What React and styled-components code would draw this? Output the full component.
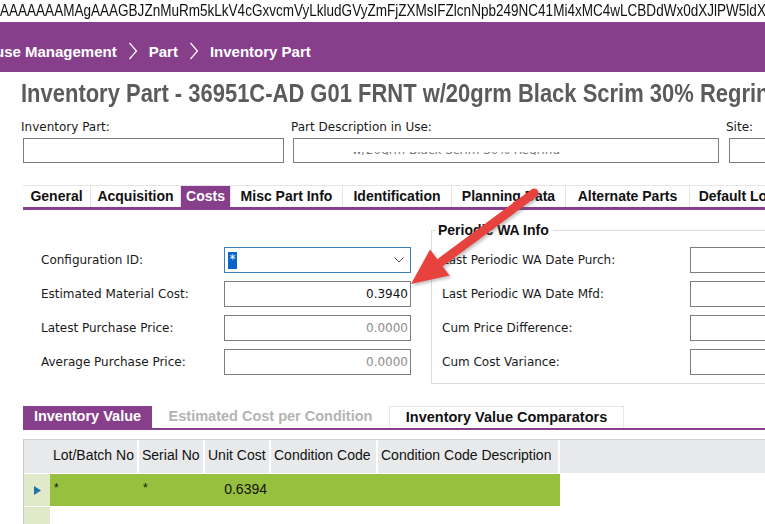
import React from "react";
import styled, { createGlobalStyle } from "styled-components";

const Global = createGlobalStyle`
  html, body { margin: 0; padding: 0; background: #fff; }
  body { width: 765px; height: 524px; overflow: hidden; }
`;

const PURPLE = "#873f8c";

const Page = styled.div`
  position: relative;
  width: 765px;
  height: 524px;
  overflow: hidden;
  background: #fff;
  font-family: "DejaVu Sans", sans-serif;
`;

const UrlLine = styled.div`
  height: 22px;
  line-height: 20px;
  font-family: "Liberation Sans", Arial, sans-serif;
  font-size: 16.5px;
  color: #111;
  white-space: nowrap;
  transform: scaleX(0.82);
  transform-origin: 0 0;
`;

const Crumbs = styled.div`
  height: 50px;
  box-sizing: border-box;
  background: ${PURPLE};
  display: flex;
  align-items: flex-start;
  gap: 11px;
  padding-top: 21px;
  margin-left: -5px;
  color: #fff;
  font-family: "Liberation Sans", Arial, sans-serif;
  font-weight: bold;
  font-size: 15px;
  line-height: 18px;
  white-space: nowrap;
`;

const Chevron = styled.svg`
  width: 10px;
  height: 18px;
  margin-top: -1px;
  flex: none;
`;

const Title = styled.h1`
  margin: 6px 0 0 21px;
  height: 30px;
  font-family: "Liberation Sans", Arial, sans-serif;
  font-weight: bold;
  font-size: 26px;
  line-height: 30px;
  color: #5b5b5b;
  white-space: nowrap;
  transform: scaleX(0.845);
  transform-origin: 0 0;
`;

const HeaderFields = styled.div`
  display: flex;
  padding-top: 11px;
  padding-left: 21px;
`;

const HeaderField = styled.div`
  width: ${(p) => p.$w}px;
  flex: none;
`;

const Label = styled.div`
  font-family: "DejaVu Sans", sans-serif;
  font-size: 12px;
  line-height: 16px;
  color: #1a1a1a;
  white-space: nowrap;
`;

const Box = styled.div`
  position: relative;
  box-sizing: border-box;
  margin-top: 3px;
  margin-left: ${(p) => p.$ml}px;
  width: ${(p) => p.$w}px;
  height: 25px;
  border: 1px solid #7c7c7c;
  overflow: hidden;
`;

const Redact = styled.div`
  position: absolute;
  background: #fff;
  left: ${(p) => p.$x}px;
  top: ${(p) => p.$y}px;
  width: ${(p) => p.$w}px;
  height: ${(p) => p.$h}px;
`;

const FaintText = styled.div`
  position: absolute;
  left: 58px;
  top: 4px;
  font-size: 12px;
  color: #777;
  white-space: nowrap;
`;

const TabBar = styled.div`
  display: flex;
  margin: ${(p) => p.$mt}px 0 0 23px;
  border-top: ${(p) => (p.$top ? "1px solid #e6e6e6" : "none")};
  border-bottom: ${(p) => p.$line}px solid ${PURPLE};
`;

const Tab = styled.div`
  flex: none;
  width: ${(p) => p.$w}px;
  height: ${(p) => p.$h}px;
  box-sizing: border-box;
  line-height: ${(p) => p.$h}px;
  text-align: center;
  font-family: "Liberation Sans", Arial, sans-serif;
  font-weight: bold;
  font-size: ${(p) => p.$fs}px;
  white-space: nowrap;
  overflow: hidden;
  border-right: 1px solid #e4e4e4;
  background: ${(p) => (p.$active ? PURPLE : "#fff")};
  color: ${(p) => (p.$active ? "#fff" : p.$dim ? "#b4b4b4" : "#111")};
`;

const LowerTab = styled(Tab)`
  line-height: ${(p) => p.$h - 1}px;
  border-top: ${(p) => (p.$boxed ? "1px solid #e6e6e6" : "none")};
  border-left: ${(p) => (p.$boxed ? "1px solid #e6e6e6" : "none")};
  border-right: ${(p) => (p.$boxed ? "1px solid #e6e6e6" : "none")};
`;

const ContentRow = styled.div`
  display: flex;
  align-items: flex-start;
  padding-left: 41px;
  height: 174px;
`;

const FormGrid = styled.div`
  display: grid;
  grid-template-columns: ${(p) => p.$cols};
  grid-auto-rows: 26px;
  row-gap: 8px;
  align-items: center;
  margin-top: ${(p) => p.$mt}px;
`;

const Input = styled.div`
  box-sizing: border-box;
  height: 26px;
  border: 1px solid ${(p) => (p.$focus ? "#3d80c2" : "#7c7c7c")};
  display: flex;
  align-items: center;
  justify-content: ${(p) => (p.$focus ? "space-between" : "flex-end")};
  padding: 0 2px 0 3px;
  font-family: "DejaVu Sans", sans-serif;
  font-size: 12px;
  color: ${(p) => (p.$dim ? "#8c8c8c" : "#111")};
`;

const Selected = styled.span`
  background: #0a63c9;
  color: #fff;
  width: 9px;
  height: 17px;
  line-height: 15px;
  text-align: center;
  font-size: 12px;
`;

const Group = styled.div`
  position: relative;
  flex: 1;
  margin-left: 20px;
  margin-top: 20px;
  height: 154px;
  box-sizing: border-box;
  border: 1px solid #dcdcdc;
  border-right: none;
  padding: 16px 0 0 10px;
`;

const GroupTitle = styled.div`
  position: absolute;
  left: 3px;
  top: -10px;
  padding: 0 4px 0 3px;
  background: #fff;
  font-family: "Liberation Sans", Arial, sans-serif;
  font-weight: bold;
  font-size: 14px;
  line-height: 18px;
  color: #111;
`;

const Table = styled.div`
  margin: 9px 0 0 23px;
  display: grid;
  grid-template-columns: 26px 89px 66px 66px 107px 182px 1fr;
  grid-template-rows: 33px 32px 30px;
  row-gap: 1px;
  border-top: 1px solid #cfcfcf;
  border-left: 1px solid #c8c8c8;
  font-family: "Liberation Sans", Arial, sans-serif;
  font-size: 14px;
  color: #111;
`;

const HeadCell = styled.div`
  background: #e8e9ea;
  border-right: ${(p) => (p.$sep ? "2px solid #fff" : "none")};
  display: flex;
  align-items: center;
  padding: 0 0 4px 3px;
  white-space: nowrap;
  overflow: hidden;
`;

const Indicator = styled.div`
  background: #e0eaca;
  display: flex;
  align-items: center;
  justify-content: center;
`;

const Cell = styled.div`
  background: ${(p) => (p.$fill ? "#97c03e" : "#fff")};
  display: flex;
  align-items: ${(p) => (p.$star ? "flex-start" : "center")};
  justify-content: ${(p) => (p.$right ? "flex-end" : "flex-start")};
  padding: ${(p) => (p.$star ? "7px 4px 0 4px" : "0 4px 3px 4px")};
  font-size: ${(p) => (p.$star ? "12px" : "14px")};
`;

const ArrowLayer = styled.svg`
  position: absolute;
  left: 0;
  top: 0;
  pointer-events: none;
`;

const leftRows = [
  { label: "Configuration ID:", focus: true },
  { label: "Estimated Material Cost:", value: "0.3940" },
  { label: "Latest Purchase Price:", value: "0.0000", dim: true },
  { label: "Average Purchase Price:", value: "0.0000", dim: true },
];

const rightRows = [
  "Last Periodic WA Date Purch:",
  "Last Periodic WA Date Mfd:",
  "Cum Price Difference:",
  "Cum Cost Variance:",
];

const tabs = [
  ["General", 68],
  ["Acquisition", 90],
  ["Costs", 50, true],
  ["Misc Part Info", 112],
  ["Identification", 109],
  ["Planning Data", 114],
  ["Alternate Parts", 124],
  ["Default Location", 128],
];

const Sep = () => (
  <Chevron viewBox="0 0 10 18">
    <path d="M1.5 1 L8.5 9 L1.5 17" fill="none" stroke="#fff" strokeWidth="1.2" />
  </Chevron>
);

export default function App() {
  return (
    <Page>
      <Global />
      <UrlLine>AAAAAAAMAgAAAGBJZnMuRm5kLkV4cGxvcmVyLkludGVyZmFjZXMsIFZlcnNpb249NC41Mi4xMC4wLCBDdWx0dXJlPW5ldXRyYWw=</UrlLine>
      <Crumbs>
        <span>use Management</span>
        <Sep />
        <span>Part</span>
        <Sep />
        <span>Inventory Part</span>
      </Crumbs>
      <Title>Inventory Part - 36951C-AD G01 FRNT w/20grm Black Scrim 30% Regrind</Title>

      <HeaderFields>
        <HeaderField $w={270}>
          <Label>Inventory Part:</Label>
          <Box $ml={2} $w={261}>
            <Redact $x={-1} $y={-1} $w={18} $h={12} />
            <Redact $x={241} $y={-1} $w={20} $h={12} />
            <Redact $x={66} $y={12} $w={18} $h={14} />
          </Box>
        </HeaderField>
        <HeaderField $w={435}>
          <Label>Part Description in Use:</Label>
          <Box $ml={2} $w={426}>
            <FaintText>w/20grm Black Scrim 30% Regrind</FaintText>
            <Redact $x={-1} $y={-1} $w={288} $h={14} />
            <Redact $x={61} $y={16} $w={199} $h={10} />
          </Box>
        </HeaderField>
        <HeaderField $w={60}>
          <Label>Site:</Label>
          <Box $ml={3} $w={60}>
            <Redact $x={1} $y={1} $w={10} $h={9} />
          </Box>
        </HeaderField>
      </HeaderFields>

      <TabBar $mt={22} $top $line={3}>
        {tabs.map(([t, w, a]) => (
          <Tab key={t} $w={w} $h={21} $fs={14} $active={a}>
            {t}
          </Tab>
        ))}
      </TabBar>

      <ContentRow>
        <FormGrid $cols="183px 187px" $mt={37}>
          {leftRows.map((r) => (
            <React.Fragment key={r.label}>
              <Label>{r.label}</Label>
              <Input $focus={r.focus} $dim={r.dim}>
                {r.focus ? (
                  <>
                    <Selected>*</Selected>
                    <svg width="12" height="8" viewBox="0 0 12 8" style={{ marginRight: 3 }}>
                      <path d="M1.5 1.5 L6 6 L10.5 1.5" fill="none" stroke="#555" strokeWidth="1" />
                    </svg>
                  </>
                ) : (
                  r.value
                )}
              </Input>
            </React.Fragment>
          ))}
        </FormGrid>
        <Group>
          <GroupTitle>Periodic WA Info</GroupTitle>
          <FormGrid $cols="248px 100px" $mt={0}>
            {rightRows.map((l) => (
              <React.Fragment key={l}>
                <Label>{l}</Label>
                <Input />
              </React.Fragment>
            ))}
          </FormGrid>
        </Group>
      </ContentRow>

      <TabBar $mt={22} $line={2}>
        <LowerTab $w={129} $h={22} $fs={14.5} $active>Inventory Value</LowerTab>
        <LowerTab $w={237} $h={22} $fs={14.5} $dim>Estimated Cost per Condition</LowerTab>
        <LowerTab $w={235} $h={22} $fs={14.5} $boxed>Inventory Value Comparators</LowerTab>
      </TabBar>

      <Table>
        <HeadCell />
        <HeadCell $sep>Lot/Batch No</HeadCell>
        <HeadCell $sep>Serial No</HeadCell>
        <HeadCell $sep>Unit Cost</HeadCell>
        <HeadCell $sep>Condition Code</HeadCell>
        <HeadCell $sep>Condition Code Description</HeadCell>
        <HeadCell />

        <Indicator>
          <svg width="7" height="9" viewBox="0 0 7 9">
            <path d="M0 0 L7 4.5 L0 9 Z" fill="#1f72a6" />
          </svg>
        </Indicator>
        <Cell $fill $star>*</Cell>
        <Cell $fill $star>*</Cell>
        <Cell $fill $right>0.6394</Cell>
        <Cell $fill />
        <Cell $fill />
        <Cell />

        <Indicator />
        <Cell />
        <Cell />
        <Cell />
        <Cell />
        <Cell />
        <Cell />
      </Table>

      <ArrowLayer width="765" height="524" viewBox="0 0 765 524">
        <defs>
          <filter id="sh" x="-20%" y="-20%" width="140%" height="140%">
            <feGaussianBlur stdDeviation="1.5" />
          </filter>
        </defs>
        <g transform="translate(2 2)" opacity="0.35" filter="url(#sh)">
          <line x1="534" y1="193" x2="441" y2="262" stroke="#555" strokeWidth="9" strokeLinecap="round" />
          <polygon points="411,284 430,249.5 449.5,275.5" fill="#555" />
        </g>
        <line x1="534" y1="193" x2="441" y2="262" stroke="#e8423f" strokeWidth="9" strokeLinecap="round" />
        <polygon points="411,284 430,249.5 449.5,275.5" fill="#e8423f" />
      </ArrowLayer>
    </Page>
  );
}
